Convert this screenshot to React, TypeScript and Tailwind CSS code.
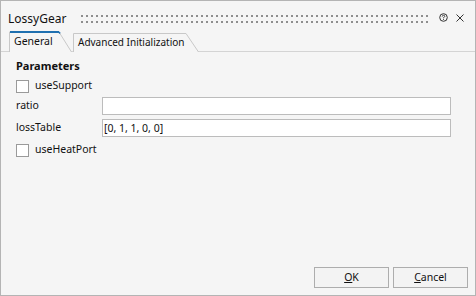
import React from 'react'

function Grip() {
  return (
    <svg className="flex-1 h-[8px] ml-[15px] mr-[9px]" height="8">
      <defs>
        <pattern id="grip" width="5" height="6" patternUnits="userSpaceOnUse">
          <rect x="0" y="0" width="2" height="2" fill="#8e8e8e" />
        </pattern>
      </defs>
      <rect x="0" y="0" width="100%" height="8" fill="url(#grip)" />
    </svg>
  )
}

function CheckRow({ label, className }: { label: string; className?: string }) {
  return (
    <div className={`flex items-center h-[18px] ${className ?? ''}`}>
      <span className="w-[13px] h-[13px] border border-[#9a9a9a] bg-white" />
      <span className="ml-[6px]">{label}</span>
    </div>
  )
}

function InputRow({ label, value, className }: { label: string; value: string; className?: string }) {
  return (
    <div className={`flex items-center h-[18px] ${className ?? ''}`}>
      <span className="w-[86px]">{label}</span>
      <div className="w-[349px] h-[18px] border border-[#bcbcbc] bg-white flex items-center pl-[1px] leading-none">
        {value}
      </div>
    </div>
  )
}

export default function App() {
  return (
    <div className="w-[476px] h-[296px] border border-[#b4b4b4] bg-[#f5f5f5] flex flex-col font-['Noto_Sans',sans-serif] text-[10.5px] text-[#111] whitespace-nowrap">
      <div className="h-[30px] flex items-center pt-[6px] pl-[7px] pr-[11px]">
        <span className="text-[12px]">LossyGear</span>
        <Grip />
        <svg width="9" height="9" viewBox="0 0 9 9" className="-mt-[3px]">
          <circle cx="4.5" cy="4.5" r="3.8" fill="none" stroke="#333" strokeWidth="1" />
          <path d="M3.2 3.6 Q3.2 2.3 4.5 2.3 Q5.8 2.3 5.8 3.4 Q5.8 4.1 4.5 4.6 V5.3" fill="none" stroke="#333" strokeWidth="0.9" />
          <rect x="4.1" y="6" width="0.9" height="0.9" fill="#333" />
        </svg>
        <svg width="8" height="8" viewBox="0 0 8 8" className="ml-[8px] -mt-[3px]">
          <path d="M0.5 0.5 L7.5 7.5 M7.5 0.5 L0.5 7.5" stroke="#333" strokeWidth="1" />
        </svg>
      </div>

      <div className="relative h-[21px] flex items-end pl-[8px] gap-[1px]">
        <div className="absolute left-0 right-0 bottom-0 h-[1px] bg-[#d4d4d4]" />
        <div className="relative z-10 w-[63px] h-[21px] flex items-center pl-[5px] pt-[1px]">
          <svg className="absolute inset-0" width="63" height="21">
            <path d="M0.5 21 V1 H50 L62.5 21" fill="#f5f5f5" stroke="#c8c8c8" strokeWidth="1" />
            <path d="M1 1 H50" stroke="#1f70b0" strokeWidth="2" />
            <path d="M50 1 L51 2.5" stroke="#1f70b0" strokeWidth="1.5" />
          </svg>
          <span className="relative">General</span>
        </div>
        <div className="relative w-[126px] h-[19px] flex items-center pl-[5px]">
          <svg className="absolute inset-0" width="126" height="19">
            <path d="M0.5 19 V0.5 H113 L125.5 19" fill="#f5f5f5" stroke="#c8c8c8" strokeWidth="1" />
          </svg>
          <span className="relative text-[10px]">Advanced Initialization</span>
        </div>
      </div>

      <div className="flex-1 px-[15px] pt-[6px]">
        <div className="h-[16px] flex items-center font-bold text-[11px]">Parameters</div>
        <CheckRow label="useSupport" className="mt-[3px]" />
        <InputRow label="ratio" value="" className="mt-[2px]" />
        <InputRow label="lossTable" value="[0, 1, 1, 0, 0]" className="mt-[4px]" />
        <CheckRow label="useHeatPort" className="mt-[4px]" />
      </div>

      <div className="flex justify-end gap-[4px] pr-[7px] pb-[7px]">
        <button className="w-[75px] h-[21px] border border-[#adadad] bg-[#f3f3f3] flex items-center justify-center">
          <span><span className="underline">O</span>K</span>
        </button>
        <button className="w-[75px] h-[21px] border border-[#adadad] bg-[#f3f3f3] flex items-center justify-center">
          <span><span className="underline">C</span>ancel</span>
        </button>
      </div>
    </div>
  )
}
